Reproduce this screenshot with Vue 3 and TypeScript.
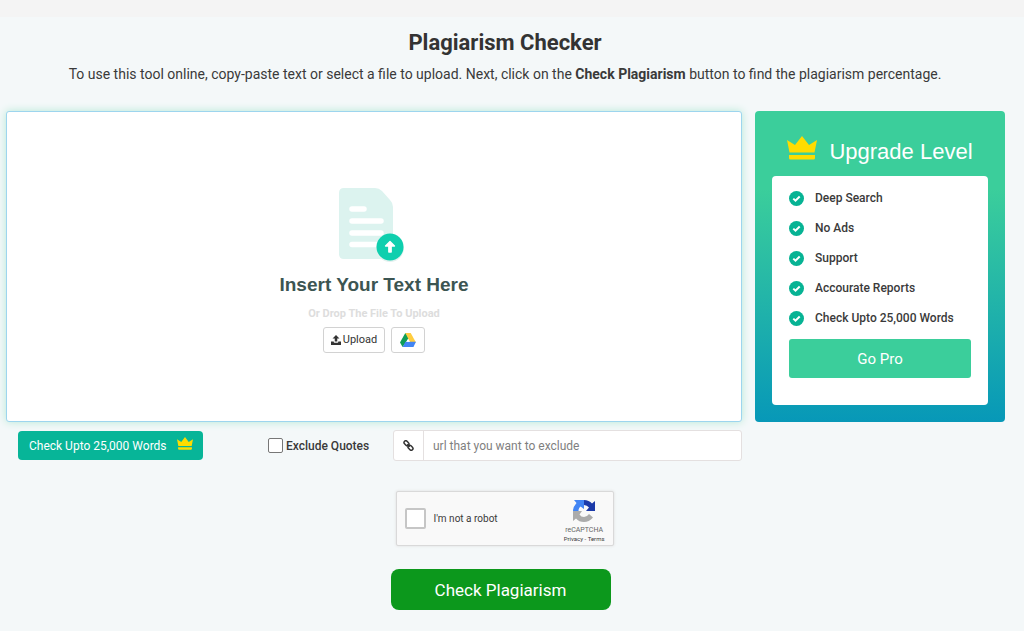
<script setup lang="ts">
import { ref } from 'vue'

const features: string[] = [
  'Deep Search',
  'No Ads',
  'Support',
  'Accourate Reports',
  'Check Upto 25,000 Words',
]

const text = ref('')
const excludeQuotes = ref(false)
const excludedUrl = ref('')
const notRobot = ref(false)
</script>

<template>
  <div class="page">
    <div class="strip"></div>
    <header class="intro">
      <h1>Plagiarism Checker</h1>
      <p>
        To use this tool online, copy-paste text or select a file to upload. Next, click on the
        <strong>Check Plagiarism</strong> button to find the plagiarism percentage.
      </p>
    </header>

    <main class="columns">
      <section class="editor">
        <textarea v-model="text" class="editor-text" aria-label="Insert your text here"></textarea>
        <div class="drop">
          <svg class="doc-icon" width="70" height="75" viewBox="0 0 70 75" aria-hidden="true">
            <path d="M5 0H36Q40 0 43 3L51 12Q54 15 54 19V67Q54 71 50 71H5Q0 71 0 66V5Q0 0 5 0Z" fill="#dcf3ef" />
            <g stroke="#fff" stroke-width="5.500" stroke-linecap="round">
              <path d="M13 21H25M13 33H42M13 45H42M13 56.500H42" />
            </g>
            <circle cx="51" cy="60" r="14" fill="#e4f1ef" />
            <circle cx="51" cy="59" r="13.500" fill="#0fcfae" />
            <path d="M51 53.500L55.500 58H52.200V64H49.800V58H46.500Z" fill="#fff" stroke="#fff" stroke-width="1.300" stroke-linejoin="round" />
          </svg>
          <h2>Insert Your Text Here</h2>
          <p>Or Drop The File To Upload</p>
          <div class="drop-actions">
            <button type="button" class="small-button upload">
              <svg width="10" height="10" viewBox="0 0 20 20" aria-hidden="true">
                <path d="M10 0L17 7H12.500V13H7.500V7H3Z" fill="#333" />
                <path d="M0 13H5.500V14Q5.500 15.500 7 15.500H13Q14.500 15.500 14.500 14V13H20V20H0Z" fill="#333" />
              </svg>
              Upload
            </button>
            <button type="button" class="small-button drive" aria-label="Google Drive">
              <svg width="16" height="14" viewBox="0 0 87 76" aria-hidden="true">
                <path d="M29 0L0 51L14 76L50 26L43 14Z" fill="#0f9d58" />
                <path d="M29 0H58L87 51H56L38 18Z" fill="#ffcd40" />
                <path d="M30 48H87L73 76H14Z" fill="#4285f4" />
                <path d="M43 32L53 48H34Z" fill="#fff" />
              </svg>
            </button>
          </div>
        </div>
      </section>

      <aside class="upgrade">
        <h2>
          <svg width="30" height="24" viewBox="0 0 30 24" aria-hidden="true">
            <path d="M0 4L8 9L15 0L22 9L30 4L27.500 16.500H2.500Z" fill="#ffdc00" />
            <path d="M2 19H28V22Q28 23.500 26.500 23.500H3.500Q2 23.500 2 22Z" fill="#ffdc00" />
          </svg>
          Upgrade Level
        </h2>
        <div class="plan">
          <ul>
            <li v-for="feature in features" :key="feature">
              <svg width="15" height="15" viewBox="0 0 15 15" aria-hidden="true">
                <circle cx="7.500" cy="7.500" r="7.500" fill="#07b394" />
                <path d="M4.300 7.600L6.500 9.700L10.700 5.500" fill="none" stroke="#fff" stroke-width="2" />
              </svg>
              {{ feature }}
            </li>
          </ul>
          <button type="button" class="go-pro">Go Pro</button>
        </div>
      </aside>

      <div class="options">
        <button type="button" class="limit">
          Check Upto 25,000 Words
          <svg width="16" height="13" viewBox="0 0 30 24" aria-hidden="true">
            <path d="M0 4L8 9L15 0L22 9L30 4L27.500 16.500H2.500Z" fill="#ffdc00" />
            <path d="M2 19H28V22Q28 23.500 26.500 23.500H3.500Q2 23.500 2 22Z" fill="#ffdc00" />
          </svg>
        </button>
        <label class="quotes">
          <input v-model="excludeQuotes" type="checkbox" />
          <span>Exclude Quotes</span>
        </label>
        <div class="url">
          <label for="exclude-url" aria-label="Excluded url">
            <svg width="11" height="11" viewBox="0 0 22 22" fill="none" stroke="#333" stroke-width="3" aria-hidden="true">
              <rect x="1.500" y="3" width="11" height="7" rx="3.500" transform="rotate(45 7 6.500)" />
              <rect x="9.500" y="12" width="11" height="7" rx="3.500" transform="rotate(45 15 15.500)" />
              <path d="M8.500 8.500L13.500 13.500" />
            </svg>
          </label>
          <input id="exclude-url" v-model="excludedUrl" type="text" placeholder="url that you want to exclude" />
        </div>
      </div>

      <form class="submit" @submit.prevent>
        <div class="captcha">
          <label>
            <input v-model="notRobot" type="checkbox" />
            <span>I'm not a robot</span>
          </label>
          <div class="captcha-brand">
            <svg width="24" height="24" viewBox="0 0 24 24" aria-hidden="true">
              <path d="M12 1Q17 1 20 4.500L23 2V12H14L17 8.500Q15 6 12 6Z" fill="#1c3aa9" />
              <path d="M12 1V10L8.500 7.500Q6.500 9 6.500 12H1Q1 8 4.500 4L2 1Z" fill="#4285f4" />
              <path d="M1 12H10L7.500 15.500Q9 18 12 18Q15 18 17 15L21 18.500Q17 23 12 23Q7 23 4 19.500L1 22Z" fill="#ababab" />
            </svg>
            <span class="captcha-name">reCAPTCHA</span>
            <span class="captcha-links"><a href="#privacy">Privacy</a> - <a href="#terms">Terms</a></span>
          </div>
        </div>
        <button type="submit" class="check">Check Plagiarism</button>
      </form>
    </main>
  </div>
</template>

<style>
body {
  background: #f4f8f9;
}
</style>

<style scoped>
.page {
  min-height: 100vh;
  color: #3a3a3a;
  background: #f4f8f9;
  font-family: Roboto, "Liberation Sans", sans-serif;
  font-size: 12px;
}

.page *,
.page {
  box-sizing: border-box;
}

h1,
h2,
p,
ul {
  margin: 0;
  padding: 0;
}

button,
input,
textarea {
  margin: 0;
  font-family: inherit;
}

.strip {
  height: 17px;
  background: #f4f4f4;
}

.intro {
  padding: 12px 14px 27px 0;
  text-align: center;
}

.intro h1 {
  color: #333;
  font-size: 22px;
  font-weight: 700;
  line-height: 28px;
}

.intro p {
  margin-top: 7px;
  font-size: 14px;
  line-height: 20px;
}

.intro strong {
  font-weight: 700;
}

.columns {
  display: grid;
  grid-template-columns: minmax(0, 1fr) 250px;
  column-gap: 13px;
  padding: 0 19px 0 6px;
}

.editor {
  display: grid;
  min-height: 311px;
  border: 1px solid #9dd5ee;
  border-radius: 3px;
  background: #fff;
  box-shadow: 0 0 8px #b4e8d6;
}

.editor-text {
  grid-area: 1 / 1;
  width: 100%;
  padding: 12px;
  border: 0;
  background: transparent;
  font-size: 14px;
  resize: none;
}

.drop {
  grid-area: 1 / 1;
  display: flex;
  flex-direction: column;
  align-items: center;
  place-self: center;
  padding-top: 7px;
}

.drop h2 {
  margin-top: 10px;
  color: #3c5552;
  font-family: "Liberation Sans", Arial, sans-serif;
  font-size: 19px;
  line-height: 24px;
}

.drop p {
  margin-top: 9px;
  color: #ddd;
  font-size: 11px;
  font-weight: 700;
  line-height: 16px;
}

.drop-actions {
  display: flex;
  gap: 6px;
  margin-top: 5px;
}

.small-button {
  display: flex;
  align-items: center;
  justify-content: center;
  height: 26px;
  padding: 0 8px;
  border: 1px solid #d2d2d2;
  border-radius: 3px;
  color: #333;
  background: #fff;
  font-size: 11px;
}

.upload {
  gap: 2px;
  padding: 0 7px;
}

.upgrade {
  display: flex;
  flex-direction: column;
  padding: 25px 17px 17px;
  border-radius: 4px;
  background: linear-gradient(#3bce9b 0%, #3bce9b 25%, #0798b8 100%);
}

.upgrade h2 {
  display: flex;
  align-items: center;
  justify-content: center;
  gap: 12px;
  color: #fff;
  font-family: "Liberation Sans", Arial, sans-serif;
  font-size: 22px;
  font-weight: 400;
  line-height: 32px;
}

.upgrade h2 svg {
  margin-bottom: 8px;
}

.plan {
  flex: 1;
  margin-top: 8px;
  padding: 7px 17px 27px;
  border-radius: 4px;
  background: #fff;
}

.plan ul {
  list-style: none;
}

.plan li {
  display: flex;
  align-items: center;
  gap: 11px;
  font-weight: 500;
  line-height: 30px;
}

.go-pro {
  width: 100%;
  height: 39px;
  margin-top: 6px;
  border: 0;
  border-radius: 3px;
  color: #fff;
  background: #3bce9b;
  font-size: 15px;
}

.options {
  display: grid;
  grid-template-columns: 250px 125px minmax(0, 1fr);
  align-items: start;
  margin-top: 8px;
  padding-left: 12px;
}

.limit {
  display: flex;
  align-items: center;
  justify-self: start;
  gap: 10px;
  height: 29px;
  margin-top: 1px;
  padding: 0 10px 0 11px;
  border: 0;
  border-radius: 4px;
  color: #fff;
  background: #07b598;
  font-size: 12px;
}

.limit svg {
  margin-bottom: 4px;
}

.quotes {
  display: flex;
  align-items: center;
  gap: 3px;
  height: 31px;
  font-weight: 500;
}

.quotes input {
  width: 15px;
  height: 15px;
  border: 1px solid #777;
  border-radius: 2px;
  background: #fff;
  appearance: none;
}

.url {
  display: flex;
  height: 31px;
  border: 1px solid #e4e0e0;
  border-radius: 3px;
  background: #fff;
}

.url label {
  display: flex;
  align-items: center;
  justify-content: center;
  width: 29px;
}

.url input {
  flex: 1;
  min-width: 0;
  padding: 0 9px;
  border: 0;
  border-left: 1px solid #e4e0e0;
  color: #333;
  background: transparent;
  font-size: 12px;
}

.url input::placeholder {
  color: #7f7f7f;
}

.submit {
  grid-column: 1 / -1;
  display: flex;
  flex-direction: column;
  align-items: center;
  padding: 30px 10px 20px 0;
}

.captcha {
  display: flex;
  justify-content: space-between;
  width: 218px;
  height: 55px;
  margin-left: 8px;
  padding: 0 8px;
  border: 1px solid #d9d9d9;
  border-radius: 2px;
  background: #f9f9f9;
  box-shadow: 0 0 3px #ddd;
}

.captcha label {
  display: flex;
  align-items: center;
  gap: 8px;
  font-size: 10px;
}

.captcha label input {
  width: 21px;
  height: 21px;
  border: 2px solid #c6c6c6;
  border-radius: 2px;
  background: #fff;
  appearance: none;
}

.captcha-brand {
  display: flex;
  flex-direction: column;
  align-items: center;
  padding-top: 7px;
}

.captcha-name {
  margin-top: 3px;
  color: #666;
  font-size: 7px;
  line-height: 8px;
}

.captcha-links {
  font-size: 6px;
  line-height: 9px;
}

.captcha-links a {
  color: inherit;
  text-decoration: none;
}

.check {
  width: 220px;
  height: 41px;
  margin-top: 23px;
  border: 0;
  border-radius: 8px;
  color: #fff;
  background: #0c981c;
  font-size: 17px;
}
</style>
